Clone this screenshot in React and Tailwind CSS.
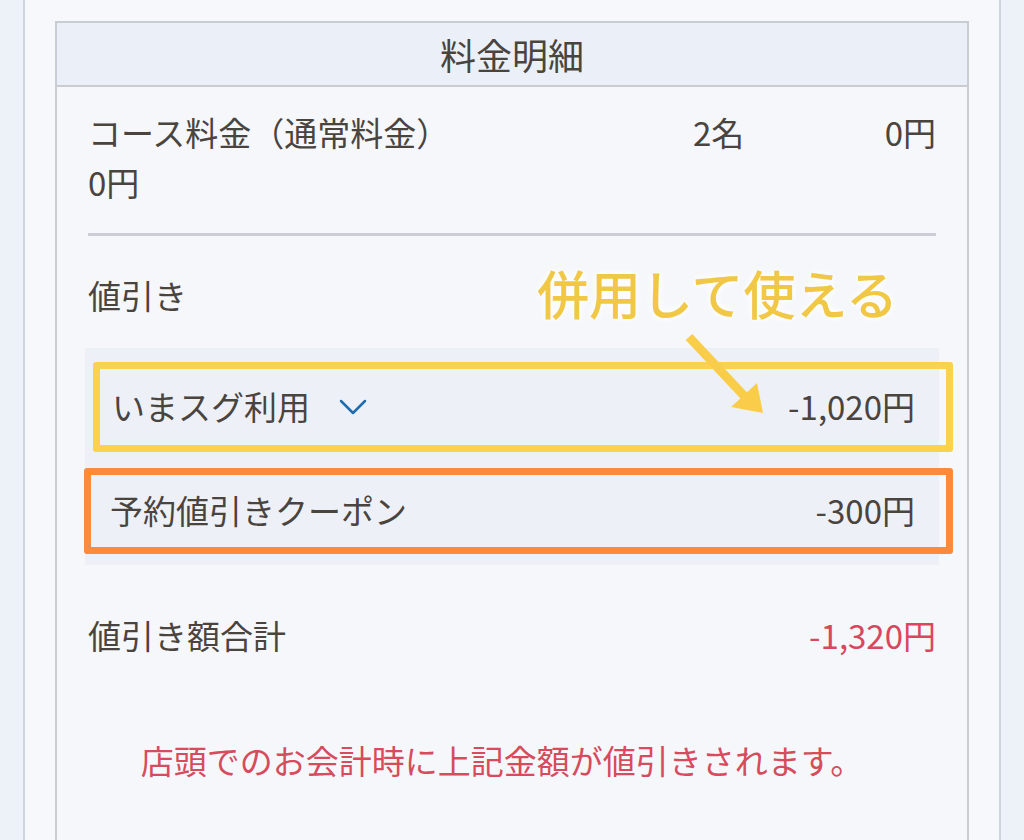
import React from 'react';

const font = { fontFamily: '"Noto Sans CJK JP", "Noto Sans", sans-serif' };

export default function App() {
  return (
    <div className="min-h-screen bg-[#edf2f9] text-[#4a443f]" style={font}>
      <div className="ml-[23px] w-[978px] min-h-[840px] border-x-2 border-[#cdd4de] bg-[#f6f8fc] pt-[21px] pl-[30px]">
        {/* Price card */}
        <div className="w-[914px] min-h-[819px] border-2 border-b-0 border-[#c9cdd3] bg-[#f5f7fb]">
          <div className="h-[64px] bg-[#ebf0f8] border-b-2 border-[#c9cdd3] flex items-center justify-center text-[36px]">
            料金明細
          </div>

          <div className="relative px-[31px] pt-[20px]">
            {/* Course */}
            <div className="flex items-center text-[33px] leading-[50px]">
              <span className="w-[605px]">コース料金（通常料金）</span>
              <span>2名</span>
              <span className="ml-auto">0円</span>
            </div>
            <div className="text-[33px] leading-[50px]">0円</div>

            <div className="mt-[26px] h-[3px] bg-[#cbcfd5]" />

            {/* Discounts */}
            <div className="mt-[34px] text-[33px] leading-[50px]">値引き</div>

            <div className="mt-[28px] -mx-[3px] bg-[#edf1f7] pt-[14px] pb-[11px] flex flex-col gap-[16px]">
              <div className="ml-[8px] -mr-[14px] h-[90px] border-[7px] border-[#fcd14f] rounded-[3px] flex items-center pl-[12px] pr-[31px] text-[33px]">
                <span>いまスグ利用</span>
                <svg className="ml-[28px]" width="30" height="20" viewBox="0 0 30 20" fill="none">
                  <path d="M3 4 L15 16 L27 4" stroke="#1f6db0" strokeWidth="2.5" strokeLinecap="round" strokeLinejoin="round" />
                </svg>
                <span className="ml-auto">-1,020円</span>
              </div>
              <div className="-ml-[1px] -mr-[14px] h-[86px] border-[7px] border-[#fb8a3c] rounded-[3px] flex items-center pl-[19px] pr-[31px] text-[33px]">
                <span>予約値引きクーポン</span>
                <span className="ml-auto">-300円</span>
              </div>
            </div>

            {/* Total */}
            <div className="mt-[45px] flex items-center text-[33px] leading-[50px]">
              <span>値引き額合計</span>
              <span className="ml-auto text-[#d9475f]">-1,320円</span>
            </div>

            <div className="mt-[75px] text-center text-[33px] leading-[50px] text-[#d74b5c] pr-[20px]">
              店頭でのお会計時に上記金額が値引きされます。
            </div>

            {/* Annotation overlay */}
            <div
              className="absolute left-[480px] top-[180px] text-[52px] leading-none font-medium text-[#f1c846]"
              style={{ textShadow: '0 0 6px #ffffff, 0 0 10px #ffffff' }}
            >
              併用して使える
            </div>
            <svg className="absolute left-[628px] top-[246px]" width="90" height="90" viewBox="0 0 90 90">
              <path d="M4 4 L62 66" stroke="#f9cd4a" strokeWidth="9" strokeLinecap="butt" />
              <path d="M78 80 L46 74 L72 50 Z" fill="#f9cd4a" />
            </svg>
          </div>
        </div>
      </div>
    </div>
  );
}
